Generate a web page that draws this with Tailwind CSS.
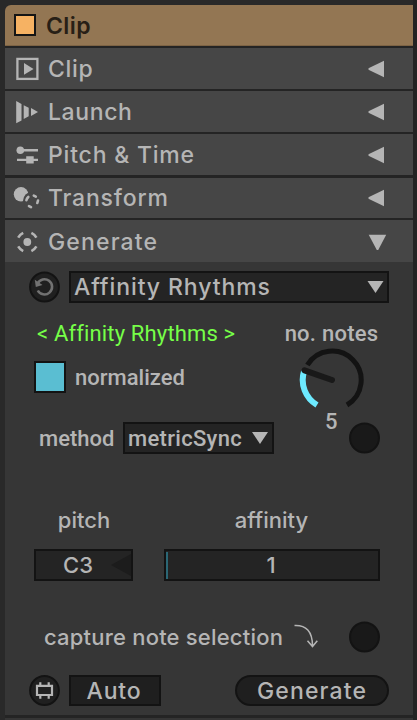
<!DOCTYPE html>
<html lang="en">
<head>
<meta charset="utf-8">
<meta name="viewport" content="width=device-width">
<title>Clip</title>
<script src="https://cdn.jsdelivr.net/npm/@tailwindcss/browser@4"></script>
</head>
<body class="bg-[#292929]">
<main class="flex h-[720px] w-[417px] flex-col overflow-hidden border-r-4 border-[#232323] bg-[#292929] pt-[5px] pl-[5px] font-['Inter',sans-serif] text-[22px] font-medium leading-[24px] whitespace-nowrap text-[#b5b5b5]">

  <!-- Title bar -->
  <header class="flex h-[41px] shrink-0 items-center rounded-tl-[6px] border-b border-[#7d6344] bg-[#937653] pl-[9px] text-[23px] font-semibold text-[#281f16]">
    <span class="h-[22px] w-[22px] border-2 border-[#151515] bg-[#f6b263]"></span>
    <span class="ml-[10px] pt-[2px] tracking-[0.4px]">Clip</span>
  </header>

  <!-- Collapsible sections -->
  <nav class="flex shrink-0 flex-col gap-[2px] bg-[#242424] pt-[2px] text-[23px]">
    <div class="flex h-[41px] items-center bg-[#464646] pl-[8px] pr-[28px]">
      <svg class="h-[26px] w-[30px]" viewBox="0 0 30 26"><rect x="4.4" y="2.9" width="20" height="20" fill="none" stroke="#b5b5b5" stroke-width="2.3"/><path d="M11 7 20.5 13 11 18.7z" fill="#b5b5b5"/></svg>
      <span class="ml-[5px] grow tracking-[0.65px]">Clip</span>
      <svg class="h-[18px] w-[17px]" viewBox="0 0 17 18"><path d="M16 .7V17.3L.5 9.7V8.3z" fill="#b5b5b5"/></svg>
    </div>
    <div class="flex h-[41px] items-center bg-[#464646] pl-[8px] pr-[28px]">
      <svg class="h-[26px] w-[30px]" viewBox="0 0 30 26" fill="#b5b5b5"><path d="M3.2 2 8.5 5v16.5L3.2 24.3zM10.7 6.3 15.7 8.8v8.4L10.7 20zM18 9 25 13 18 17z"/></svg>
      <span class="ml-[5px] grow tracking-[0.6px]">Launch</span>
      <svg class="h-[18px] w-[17px]" viewBox="0 0 17 18"><path d="M16 .7V17.3L.5 9.7V8.3z" fill="#b5b5b5"/></svg>
    </div>
    <div class="flex h-[41px] items-center bg-[#464646] pl-[8px] pr-[28px]">
      <svg class="h-[26px] w-[30px]" viewBox="0 0 30 26" fill="#b5b5b5"><circle cx="7.3" cy="8.3" r="3.8"/><path d="M7 7.1H25V9.5H7zM4 16.7H25V19.1H4zM13.2 14.3h7.5v7.3h-7.5z"/></svg>
      <span class="ml-[5px] grow tracking-[0.8px]">Pitch &amp; Time</span>
      <svg class="h-[18px] w-[17px]" viewBox="0 0 17 18"><path d="M16 .7V17.3L.5 9.7V8.3z" fill="#b5b5b5"/></svg>
    </div>
    <div class="mt-px flex h-[40px] items-center bg-[#464646] pl-[8px] pr-[28px]">
      <svg class="h-[26px] w-[30px]" viewBox="0 0 30 26"><circle cx="8" cy="9.3" r="7.2" fill="#b5b5b5"/><circle cx="19" cy="15.8" r="9" fill="#464646"/><g fill="none" stroke="#b5b5b5" stroke-width="2.6" stroke-linecap="round"><path d="M13.4 15.3 Q13.8 13.4 15.3 12M20.8 10.7 22.8 11.7M25 15.6 24.3 18M16 21.2 18 22.2"/></g></svg>
      <span class="ml-[5px] grow tracking-[0.8px]">Transform</span>
      <svg class="h-[18px] w-[17px]" viewBox="0 0 17 18"><path d="M16 .7V17.3L.5 9.7V8.3z" fill="#b5b5b5"/></svg>
    </div>
    <div class="flex h-[42px] items-center bg-[#464646] pt-px pl-[8px] pr-[26px]">
      <svg class="h-[26px] w-[30px]" viewBox="0 0 30 26"><circle cx="14.3" cy="13" r="3.9" fill="#b5b5b5"/><g fill="none" stroke="#b5b5b5" stroke-width="2.6"><path d="M5.2 8.6 Q7 5.5 10.2 3.9M18.4 3.9Q21.6 5.5 23.4 8.6M23.4 17.4Q21.6 20.5 18.4 22.1M10.2 22.1Q7 20.5 5.2 17.4"/></g></svg>
      <span class="ml-[5px] grow tracking-[1.15px]">Generate</span>
      <svg class="h-[18px] w-[19px]" viewBox="0 0 19 18"><path d="M.7 1.7H18.2L10.2 17H8.8z" fill="#b5b5b5"/></svg>
    </div>
  </nav>

  <!-- Generate panel -->
  <section class="flex h-[453px] shrink-0 flex-col bg-[#363636] pt-[9px]">
    <div class="flex h-[32px] items-center pl-[24px]">
      <svg class="h-[32px] w-[31px]" viewBox="0 0 31 32"><circle cx="15.5" cy="16" r="14.4" fill="#202020" stroke="#131313" stroke-width="2"/><path d="M8.6 12.6A7.6 7.6 0 1 1 8.8 19.5" fill="none" stroke="#727272" stroke-width="2.6"/><path d="M5.8 8.8 6.8 16 13.5 14z" fill="#727272"/></svg>
      <div class="ml-[9px] flex h-[32px] w-[320px] items-center border-2 border-[#131313] bg-[#242424] pl-[3px] pr-[3px]">
        <span class="grow text-[23px] tracking-[0.9px]">Affinity Rhythms</span>
        <svg class="h-[12px] w-[17px]" viewBox="0 0 17 12"><path d="M.5 0H16.5L8.5 12z" fill="#b5b5b5"/></svg>
      </div>
    </div>

    <div class="flex h-[151px] font-['Roboto',sans-serif]">
      <div class="flex w-[270px] flex-col pt-[19px]">
        <div class="pl-[32px] font-normal tracking-[0.15px] text-[#76ff48]">&lt; Affinity Rhythms &gt;</div>
        <div class="mt-[15px] flex h-[32px] items-center pl-[29px]">
          <span class="h-[32px] w-[32px] border-[2px] border-[#131313] bg-[#5abed2]"></span>
          <span class="ml-[9px] pt-px">normalized</span>
        </div>
        <div class="mt-[29px] flex h-[32px] items-center pl-[34px]">
          <span class="w-[84px] pt-[2px]">method</span>
          <div class="flex h-[32px] w-[151px] items-center border-2 border-[#131313] bg-[#242424] pl-[3px] pr-[4px]">
            <span class="grow pt-px tracking-[0.3px]">metricSync</span>
            <svg class="h-[12px] w-[16px]" viewBox="0 0 16 12"><path d="M0 0H16L8 12z" fill="#b5b5b5"/></svg>
          </div>
        </div>
      </div>
      <div class="flex w-[113px] flex-col items-center pt-[19px]">
        <div class="tracking-[0.25px]">no. notes</div>
        <svg class="h-[64px] w-[66px]" viewBox="299 346 66 64" fill="none"><path d="M307.4 365A29 29 0 1 1 347 405" stroke="#131313" stroke-width="5"/><path d="M317 405A29 29 0 0 1 304 371.5" stroke="#6deaff" stroke-width="6"/><path d="M304.5 370.3 332 380" stroke="#191919" stroke-width="6" stroke-linecap="round"/></svg>
        <div class="flex h-[44px] w-full pl-[50px]">
          <span class="w-[24px]">5</span>
          <svg class="mt-[12px] h-[32px] w-[31px]" viewBox="0 0 31 32"><circle cx="15.5" cy="16" r="14.5" fill="#191919" stroke="#131313" stroke-width="2"/></svg>
        </div>
      </div>
    </div>

    <div class="mt-[54px] flex h-[24px]">
      <span class="w-[158px] text-center">pitch</span>
      <span class="w-[217px] text-center">affinity</span>
    </div>
    <div class="mt-[17px] flex h-[32px] pl-[29px]">
      <div class="flex h-[32px] w-[99px] items-center border-2 border-[#131313] bg-[#242424]">
        <span class="w-[84px] text-center">C3</span>
        <svg class="-ml-[9px] h-[22px] w-[20px]" viewBox="0 0 20 22"><path d="M20 0V22L0 11z" fill="#1c1c1c"/></svg>
      </div>
      <div class="ml-[31px] flex h-[32px] w-[216px] items-center border-2 border-[#131313] bg-[#242424]">
        <span class="h-[27px] w-[2px] bg-[#2b6775]"></span>
        <span class="grow pr-[4px] text-center">1</span>
      </div>
    </div>
    <div class="mt-[40px] flex h-[32px] items-center pl-[39px]">
      <span class="w-[249px] tracking-[0.2px]">capture note selection</span>
      <svg class="h-[28px] w-[27px]" viewBox="0 0 27 28" fill="none" stroke="#b5b5b5" stroke-width="1.5"><path d="M1.5 2.6C13 2 19.5 8.4 19.5 23M14.5 17.7 19.5 23.5 24.3 17.7"/></svg>
      <svg class="ml-[29px] h-[32px] w-[31px]" viewBox="0 0 31 32"><circle cx="15.5" cy="16" r="14.5" fill="#191919" stroke="#131313" stroke-width="2"/></svg>
    </div>
    <div class="mt-[22px] flex h-[31px] items-center pl-[24px]">
      <svg class="h-[31px] w-[31px]" viewBox="0 0 31 31"><circle cx="15.5" cy="15.5" r="14.4" fill="#202020" stroke="#131313" stroke-width="2"/><path d="M8 10.8H23V20H8zM11.3 7.2V10.8M19.7 7.2V10.8M11.3 20V23.8M19.7 20V23.8" fill="none" stroke="#b5b5b5" stroke-width="2.2"/></svg>
      <div class="ml-[9px] flex h-[31px] w-[92px] items-center justify-center border-2 border-[#131313] bg-[#1f1f1f] pr-[2px] text-[23px] tracking-[0.8px]">Auto</div>
      <div class="ml-[74px] flex h-[31px] w-[154px] items-center justify-center rounded-full border-2 border-[#131313] bg-[#1f1f1f] text-[23px] tracking-[1.15px]">Generate</div>
    </div>
  </section>
  <div class="h-[3px] shrink-0 bg-[#242424]"></div>
  <div class="h-[2px] shrink-0 bg-[#353535]"></div>
</main>
</body>
</html>
